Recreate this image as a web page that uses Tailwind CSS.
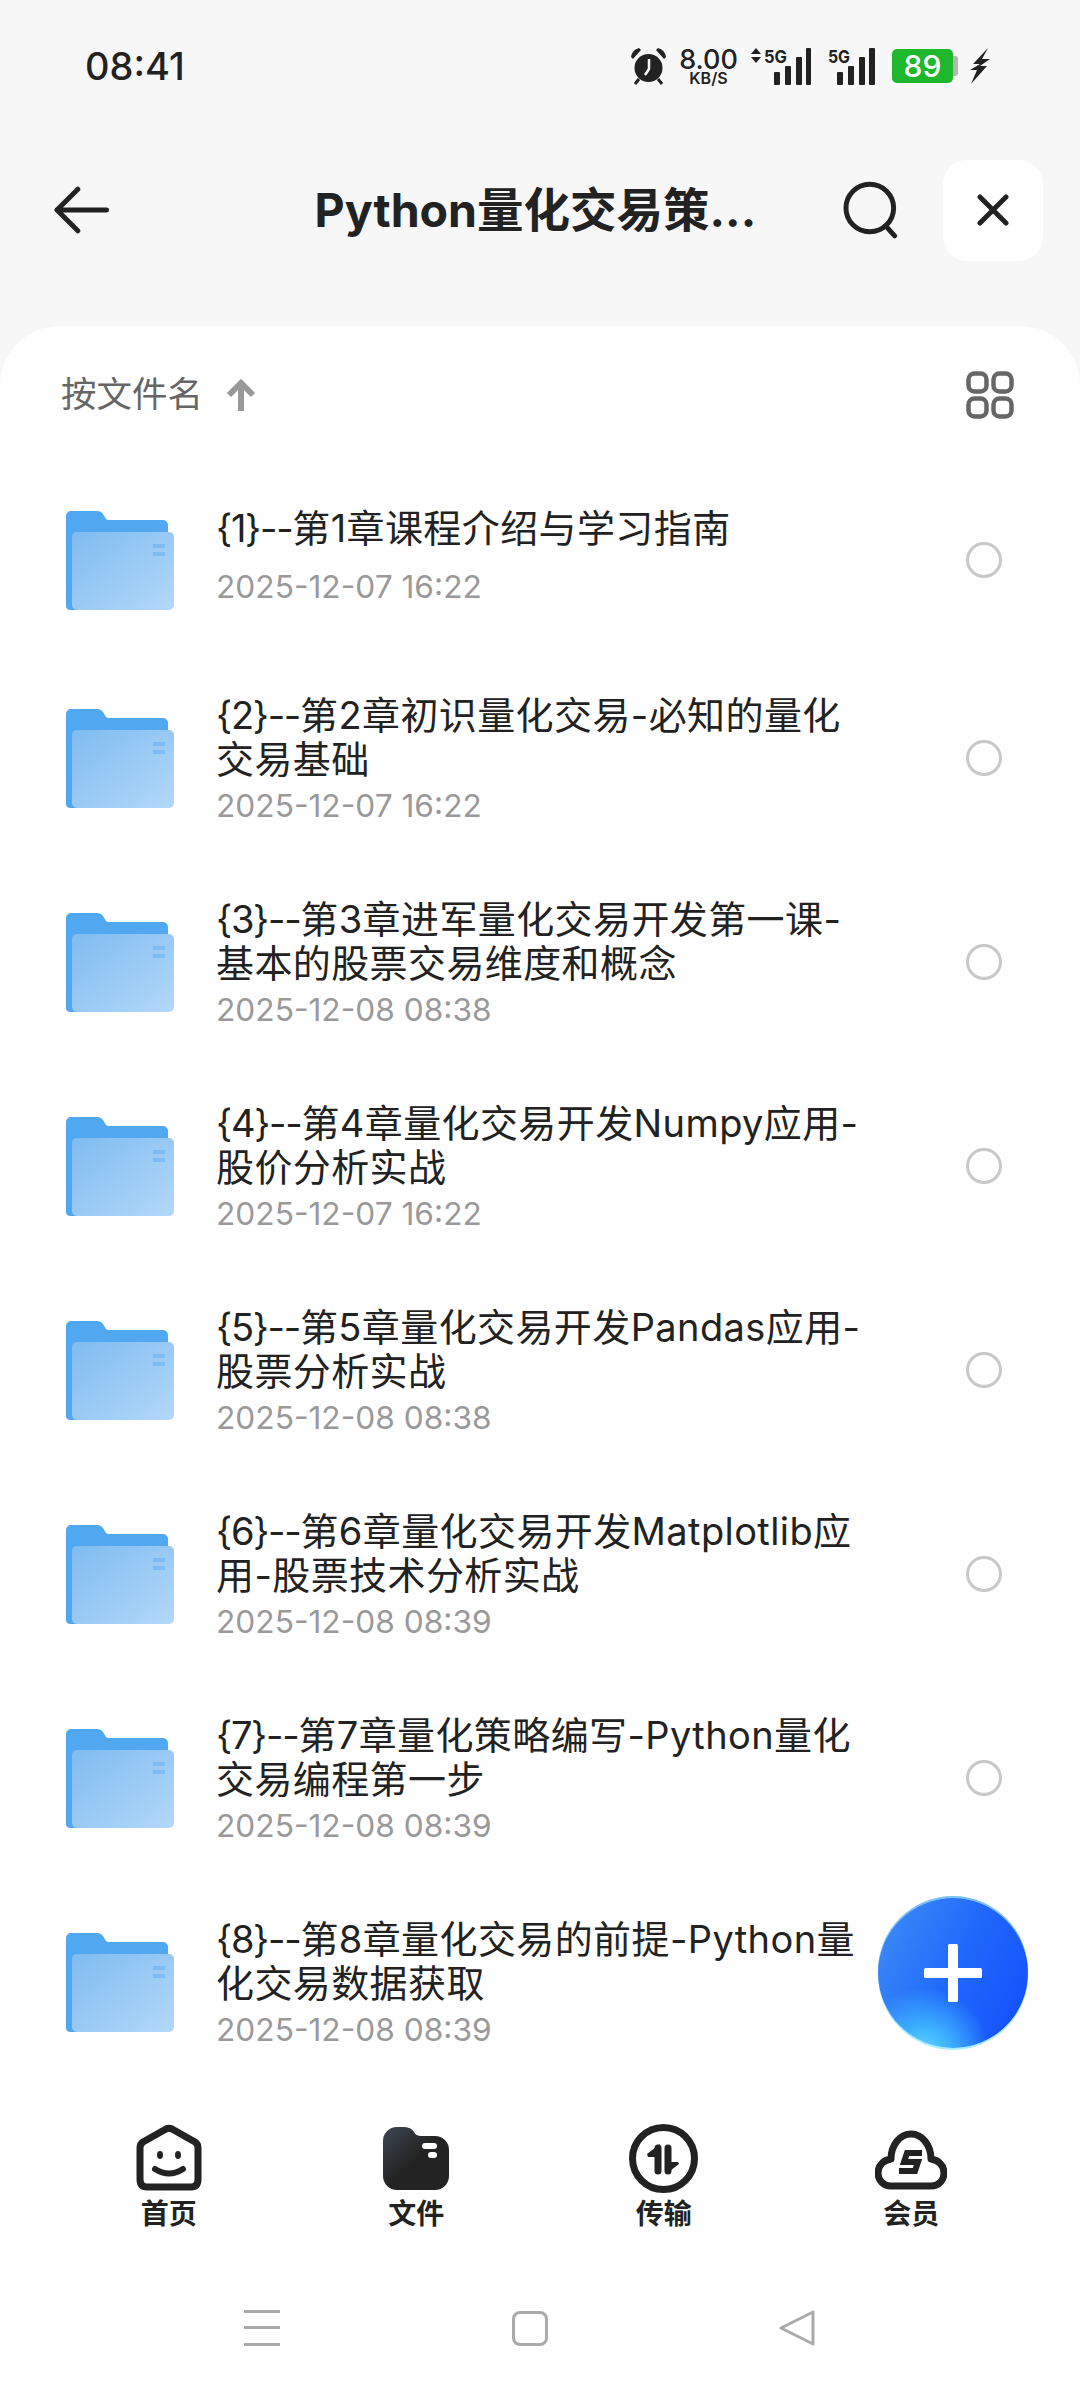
<!doctype html>
<html lang="zh"><head><meta charset="utf-8"><script src="https://cdn.jsdelivr.net/npm/@tailwindcss/browser@4"></script></head>
<body class="m-0 font-['Inter','Noto_Sans_CJK_SC',sans-serif]">
<div class="relative w-[1080px] h-[2392px] overflow-hidden bg-[#f7f7f8] text-[#222]">
<svg width="0" height="0" class="absolute"><defs>
<linearGradient id="fb" x1="0" y1="0" x2="1" y2="1"><stop offset="0" stop-color="#7fbcf0"/><stop offset="1" stop-color="#b3d8f9"/></linearGradient>
<linearGradient id="fd" x1="0" y1="0" x2="1" y2="1"><stop offset="0" stop-color="#3e4753"/><stop offset=".5" stop-color="#232323"/></linearGradient>
<symbol id="folder" viewBox="0 0 108 99"><path d="M0 5a5 5 0 0 1 5-5H31q4 0 6 3l3 5q1 1 3 1H97a5 5 0 0 1 5 5V95q0 4-5 4H5q-5 0-5-4Z" fill="#52a8f0"/><rect x="6" y="21" width="102" height="78" rx="5" fill="url(#fb)"/><rect x="87" y="33" width="12" height="4" fill="#6db0ef" opacity=".6"/><rect x="87" y="41" width="12" height="4" fill="#6db0ef" opacity=".6"/></symbol>
</defs></svg>

<!-- status bar -->
<div class="h-[132px] flex items-center justify-between pl-[85px] pr-[90px]">
  <span class="text-[38px] font-medium leading-none">08:41</span>
  <div class="flex items-center h-[40px]">
    <svg width="37" height="38" viewBox="0 0 37 38" fill="#222"><circle cx="18.5" cy="21" r="14"/><path d="M1 10Q2 3 9 1L11 3 3 12ZM36 10Q35 3 28 1L26 3 34 12Z"/><path d="M9 32 5 37M28 32l4 5" stroke="#222" stroke-width="3"/><path d="M19 12V22L15 28" stroke="#fff" stroke-width="2.5" fill="none"/></svg>
    <div class="ml-[13px] w-[57px] flex flex-col items-center font-medium text-[#222]"><span class="text-[27px] leading-[24px]">8.00</span><span class="text-[16px] font-semibold leading-[12px]">KB/S</span></div>
    <svg class="ml-[14px] -mt-[5px]" width="60" height="42" viewBox="0 -5 60 42" fill="#222"><path d="M5 0 10 6H0ZM5 15 10 9H0Z"/><text x="13" y="15" font-size="18" font-weight="700" textLength="23" lengthAdjust="spacingAndGlyphs">5G</text><rect x="23" y="24" width="6" height="13" rx="1"/><rect x="34" y="18" width="6" height="19" rx="1"/><rect x="45" y="9" width="6" height="28" rx="1"/><rect x="55" y="0" width="5" height="37" rx="1"/></svg>
    <svg class="ml-[17px] -mt-[5px]" width="47" height="42" viewBox="0 -5 47 42" fill="#222"><text x="0" y="15" font-size="18" font-weight="700" textLength="22" lengthAdjust="spacingAndGlyphs">5G</text><rect x="9" y="24" width="6" height="13" rx="1"/><rect x="20" y="18" width="6" height="19" rx="1"/><rect x="31" y="9" width="6" height="28" rx="1"/><rect x="41" y="0" width="6" height="37" rx="1"/></svg>
    <div class="ml-[17px] flex items-center">
      <div class="w-[61px] h-[34px] rounded-[5px] bg-[#1db82c] text-white text-[30px] font-medium leading-[34px] text-center">89</div>
      <div class="w-[5px] h-[20px] rounded-r-[3px] bg-[#b5b5b5]"></div>
    </div>
    <svg class="ml-[12px]" width="20" height="36" viewBox="0 0 20 36" fill="#222"><path d="M18 0 3 16 10 16 0 22 7 22 1 36 17 18 10 18 20 11 12 11Z"/></svg>
  </div>
</div>

<!-- header -->
<div class="h-[156px] mb-[38px] flex items-center pl-[54px] pr-[37px]">
  <svg width="56" height="48" viewBox="0 0 56 48" fill="none" stroke="#222" stroke-width="5" stroke-linecap="round" stroke-linejoin="round"><path d="M24 3 3 24l21 21M3 24h50"/></svg>
  <div class="ml-[205px] w-[442px] text-[46.5px] font-bold leading-none whitespace-nowrap">Python量化交易策...</div>
  <svg class="ml-[86px]" width="58" height="58" viewBox="0 0 58 58" fill="none" stroke="#222" stroke-width="5" stroke-linecap="round"><circle cx="28" cy="27" r="24"/><path d="M44 45 53 55"/></svg>
  <div class="ml-[43px] w-[101px] h-[101px] rounded-[24px] bg-white flex items-center justify-center">
    <svg width="32" height="32" viewBox="0 0 32 32" fill="none" stroke="#222" stroke-width="5" stroke-linecap="round"><path d="M3 3 29 29M29 3 3 29"/></svg>
  </div>
</div>

<!-- sheet -->
<div class="bg-white rounded-t-[60px] h-[2066px] flex flex-col">
  <div class="h-[138px] shrink-0 flex items-center justify-between pl-[61px] pr-[66px]">
    <div class="flex items-center">
      <span class="text-[35.5px] leading-none text-[#666]">按文件名</span>
      <svg class="ml-[23px]" width="30" height="32" viewBox="0 0 30 32" fill="none" stroke="#999" stroke-width="6"><path d="M15 32V4M3 16 15 4l12 12"/></svg>
    </div>
    <svg width="48" height="48" viewBox="0 0 48 48" fill="none" stroke="#666" stroke-width="4.5"><rect x="2.500" y="2.500" width="18" height="18" rx="6"/><rect x="27.500" y="2.500" width="18" height="18" rx="6"/><rect x="2.500" y="27.500" width="18" height="18" rx="6"/><rect x="27.500" y="27.500" width="18" height="18" rx="6"/></svg>
  </div>

  <div class="flex flex-col flex-1">
    <div class="h-[192px] flex items-center pl-[66px] pr-[78px]">
      <svg class="shrink-0 mt-[1px]" width="108" height="99"><use href="#folder"/></svg>
      <div class="ml-[42px] flex-1 pb-[5px] text-[38px] leading-[44px] tracking-[0.4px]"><span class="tracking-[-1.3px]">{1}--</span>第1章课程介绍与学习指南<div class="mt-[14px] text-[31.7px] leading-[45px] tracking-normal text-[#999]">2025-12-07 16:22</div></div>
      <div class="w-[36px] h-[36px] rounded-full border-[3px] border-[#c8c8c8]"></div>
    </div>
    <div class="h-[204px] flex items-center pl-[66px] pr-[78px]">
      <svg class="shrink-0 mt-[1px]" width="108" height="99"><use href="#folder"/></svg>
      <div class="ml-[42px] flex-1 pt-[4px] text-[38px] leading-[44px] tracking-[0.4px]"><span class="tracking-[-1.3px]">{2}--</span>第2章初识量化交易-必知的量化<br>交易基础<div class="mt-[2px] text-[31.7px] leading-[45px] tracking-normal text-[#999]">2025-12-07 16:22</div></div>
      <div class="w-[36px] h-[36px] rounded-full border-[3px] border-[#c8c8c8]"></div>
    </div>
    <div class="h-[204px] flex items-center pl-[66px] pr-[78px]">
      <svg class="shrink-0 mt-[1px]" width="108" height="99"><use href="#folder"/></svg>
      <div class="ml-[42px] flex-1 pt-[4px] text-[38px] leading-[44px] tracking-[0.4px]"><span class="tracking-[-1.3px]">{3}--</span>第3章进军量化交易开发第一课-<br>基本的股票交易维度和概念<div class="mt-[2px] text-[31.7px] leading-[45px] tracking-normal text-[#999]">2025-12-08 08:38</div></div>
      <div class="w-[36px] h-[36px] rounded-full border-[3px] border-[#c8c8c8]"></div>
    </div>
    <div class="h-[204px] flex items-center pl-[66px] pr-[78px]">
      <svg class="shrink-0 mt-[1px]" width="108" height="99"><use href="#folder"/></svg>
      <div class="ml-[42px] flex-1 pt-[4px] text-[38px] leading-[44px] tracking-[0.4px]"><span class="tracking-[-1.3px]">{4}--</span>第4章量化交易开发Numpy应用-<br>股价分析实战<div class="mt-[2px] text-[31.7px] leading-[45px] tracking-normal text-[#999]">2025-12-07 16:22</div></div>
      <div class="w-[36px] h-[36px] rounded-full border-[3px] border-[#c8c8c8]"></div>
    </div>
    <div class="h-[204px] flex items-center pl-[66px] pr-[78px]">
      <svg class="shrink-0 mt-[1px]" width="108" height="99"><use href="#folder"/></svg>
      <div class="ml-[42px] flex-1 pt-[4px] text-[38px] leading-[44px] tracking-[0.4px]"><span class="tracking-[-1.3px]">{5}--</span>第5章量化交易开发Pandas应用-<br>股票分析实战<div class="mt-[2px] text-[31.7px] leading-[45px] tracking-normal text-[#999]">2025-12-08 08:38</div></div>
      <div class="w-[36px] h-[36px] rounded-full border-[3px] border-[#c8c8c8]"></div>
    </div>
    <div class="h-[204px] flex items-center pl-[66px] pr-[78px]">
      <svg class="shrink-0 mt-[1px]" width="108" height="99"><use href="#folder"/></svg>
      <div class="ml-[42px] flex-1 pt-[4px] text-[38px] leading-[44px] tracking-[0.4px]"><span class="tracking-[-1.3px]">{6}--</span>第6章量化交易开发Matplotlib应<br>用-股票技术分析实战<div class="mt-[2px] text-[31.7px] leading-[45px] tracking-normal text-[#999]">2025-12-08 08:39</div></div>
      <div class="w-[36px] h-[36px] rounded-full border-[3px] border-[#c8c8c8]"></div>
    </div>
    <div class="h-[204px] flex items-center pl-[66px] pr-[78px]">
      <svg class="shrink-0 mt-[1px]" width="108" height="99"><use href="#folder"/></svg>
      <div class="ml-[42px] flex-1 pt-[4px] text-[38px] leading-[44px] tracking-[0.4px]"><span class="tracking-[-1.3px]">{7}--</span>第7章量化策略编写-Python量化<br>交易编程第一步<div class="mt-[2px] text-[31.7px] leading-[45px] tracking-normal text-[#999]">2025-12-08 08:39</div></div>
      <div class="w-[36px] h-[36px] rounded-full border-[3px] border-[#c8c8c8]"></div>
    </div>
    <div class="h-[204px] flex items-center pl-[66px] pr-[78px]">
      <svg class="shrink-0 mt-[1px]" width="108" height="99"><use href="#folder"/></svg>
      <div class="ml-[42px] flex-1 pt-[4px] text-[38px] leading-[44px] tracking-[0.4px]"><span class="tracking-[-1.3px]">{8}--</span>第8章量化交易的前提-Python量<br>化交易数据获取<div class="mt-[2px] text-[31.7px] leading-[45px] tracking-normal text-[#999]">2025-12-08 08:39</div></div>
      <div class="w-[36px] h-[36px] rounded-full border-[3px] border-[#c8c8c8]"></div>
    </div>

    <!-- tab bar -->
    <div class="h-[214px] pt-[40px] px-[45px] grid grid-cols-4 content-start">
      <div class="flex flex-col items-center">
        <svg width="66" height="69" viewBox="0 0 66 69" fill="none" stroke="#222"><path d="M4 24q0-4 3-6L30 5q3-1.500 6 0L59 18q3 2 3 6V55q0 8-7 8H11q-7 0-7-8Z" stroke-width="7" stroke-linejoin="round"/><ellipse cx="24" cy="31" rx="3" ry="4" fill="#222" stroke="none"/><ellipse cx="42" cy="31" rx="3" ry="4" fill="#222" stroke="none"/><path d="M19 45Q33 54 47 45" stroke-width="6" stroke-linecap="round"/></svg>
        <span class="mt-[5px] text-[28px] font-bold leading-[32px]">首页</span>
      </div>
      <div class="flex flex-col items-center">
        <svg width="66" height="69" viewBox="0 0 66 69"><path d="M0 17A14 14 0 0 1 14 3H20Q28 3 31 8 33 12 38 12H52A14 14 0 0 1 66 26V52A14 14 0 0 1 52 66H14A14 14 0 0 1 0 52Z" fill="url(#fd)"/><rect x="39" y="19" width="15" height="6" rx="3" fill="#fff"/><rect x="45" y="28" width="9" height="6" rx="3" fill="#fff"/></svg>
        <span class="mt-[5px] text-[28px] font-bold leading-[32px]">文件</span>
      </div>
      <div class="flex flex-col items-center">
        <svg width="69" height="69" viewBox="0 0 69 69" fill="#222" stroke="#222"><circle cx="34.500" cy="34.500" r="31" fill="none" stroke-width="7"/><path d="M29 24V47M39 24V47" stroke-width="7" stroke-linecap="round"/><path d="M31 20 18 30l1 3H31ZM37 50 50 40l-1-2H37Z" stroke="none"/></svg>
        <span class="mt-[5px] text-[28px] font-bold leading-[32px]">传输</span>
      </div>
      <div class="flex flex-col items-center">
        <svg width="72" height="69" viewBox="0 0 72 69" fill="none" stroke="#222"><path d="M16 62H56C64 62 69 56 69 49 69 41 63 36 56 35 56 21 47 10 36 10 25 10 16 21 16 35 9 36 3 41 3 49 3 56 8 62 16 62Z" stroke-width="7" stroke-linejoin="round"/><path d="M47 29H32L29 38H43L40 47H24" stroke-width="6"/></svg>
        <span class="mt-[5px] text-[28px] font-bold leading-[32px]">会员</span>
      </div>
    </div>

    <!-- system nav -->
    <div class="flex items-center pl-[244px] h-[60px]">
      <svg width="36" height="38" viewBox="0 0 36 38" fill="#aaa"><rect y="1" width="36" height="3"/><rect y="17" width="36" height="3"/><rect y="34" width="36" height="3"/></svg>
      <div class="ml-[232px] w-[36px] h-[35px] rounded-[8px] border-[3px] border-[#aaa]"></div>
      <svg class="ml-[231px]" width="36" height="36" viewBox="0 0 36 36" fill="none" stroke="#aaa" stroke-width="3" stroke-linejoin="round"><path d="M34 2V34L2 18Z"/></svg>
    </div>
  </div>
</div>

<!-- FAB -->
<div class="absolute left-[878px] top-[1898px] w-[150px] h-[150px] rounded-full flex items-center justify-center bg-[radial-gradient(circle_at_30%_105%,#5fdcff_0%,#3fb4ff_14%,transparent_36%),linear-gradient(115deg,#3f8ff6_0%,#2069fb_50%,#134cfb_100%)] shadow-[0_-2px_0_#7cc0f5,0_2px_0_#a4eeff]">
  <svg width="58" height="58" viewBox="0 0 58 58" fill="#fff"><rect x="24" width="10" height="58" rx="1.500"/><rect y="24" width="58" height="10" rx="1.500"/></svg>
</div>
</div>
</body></html>
